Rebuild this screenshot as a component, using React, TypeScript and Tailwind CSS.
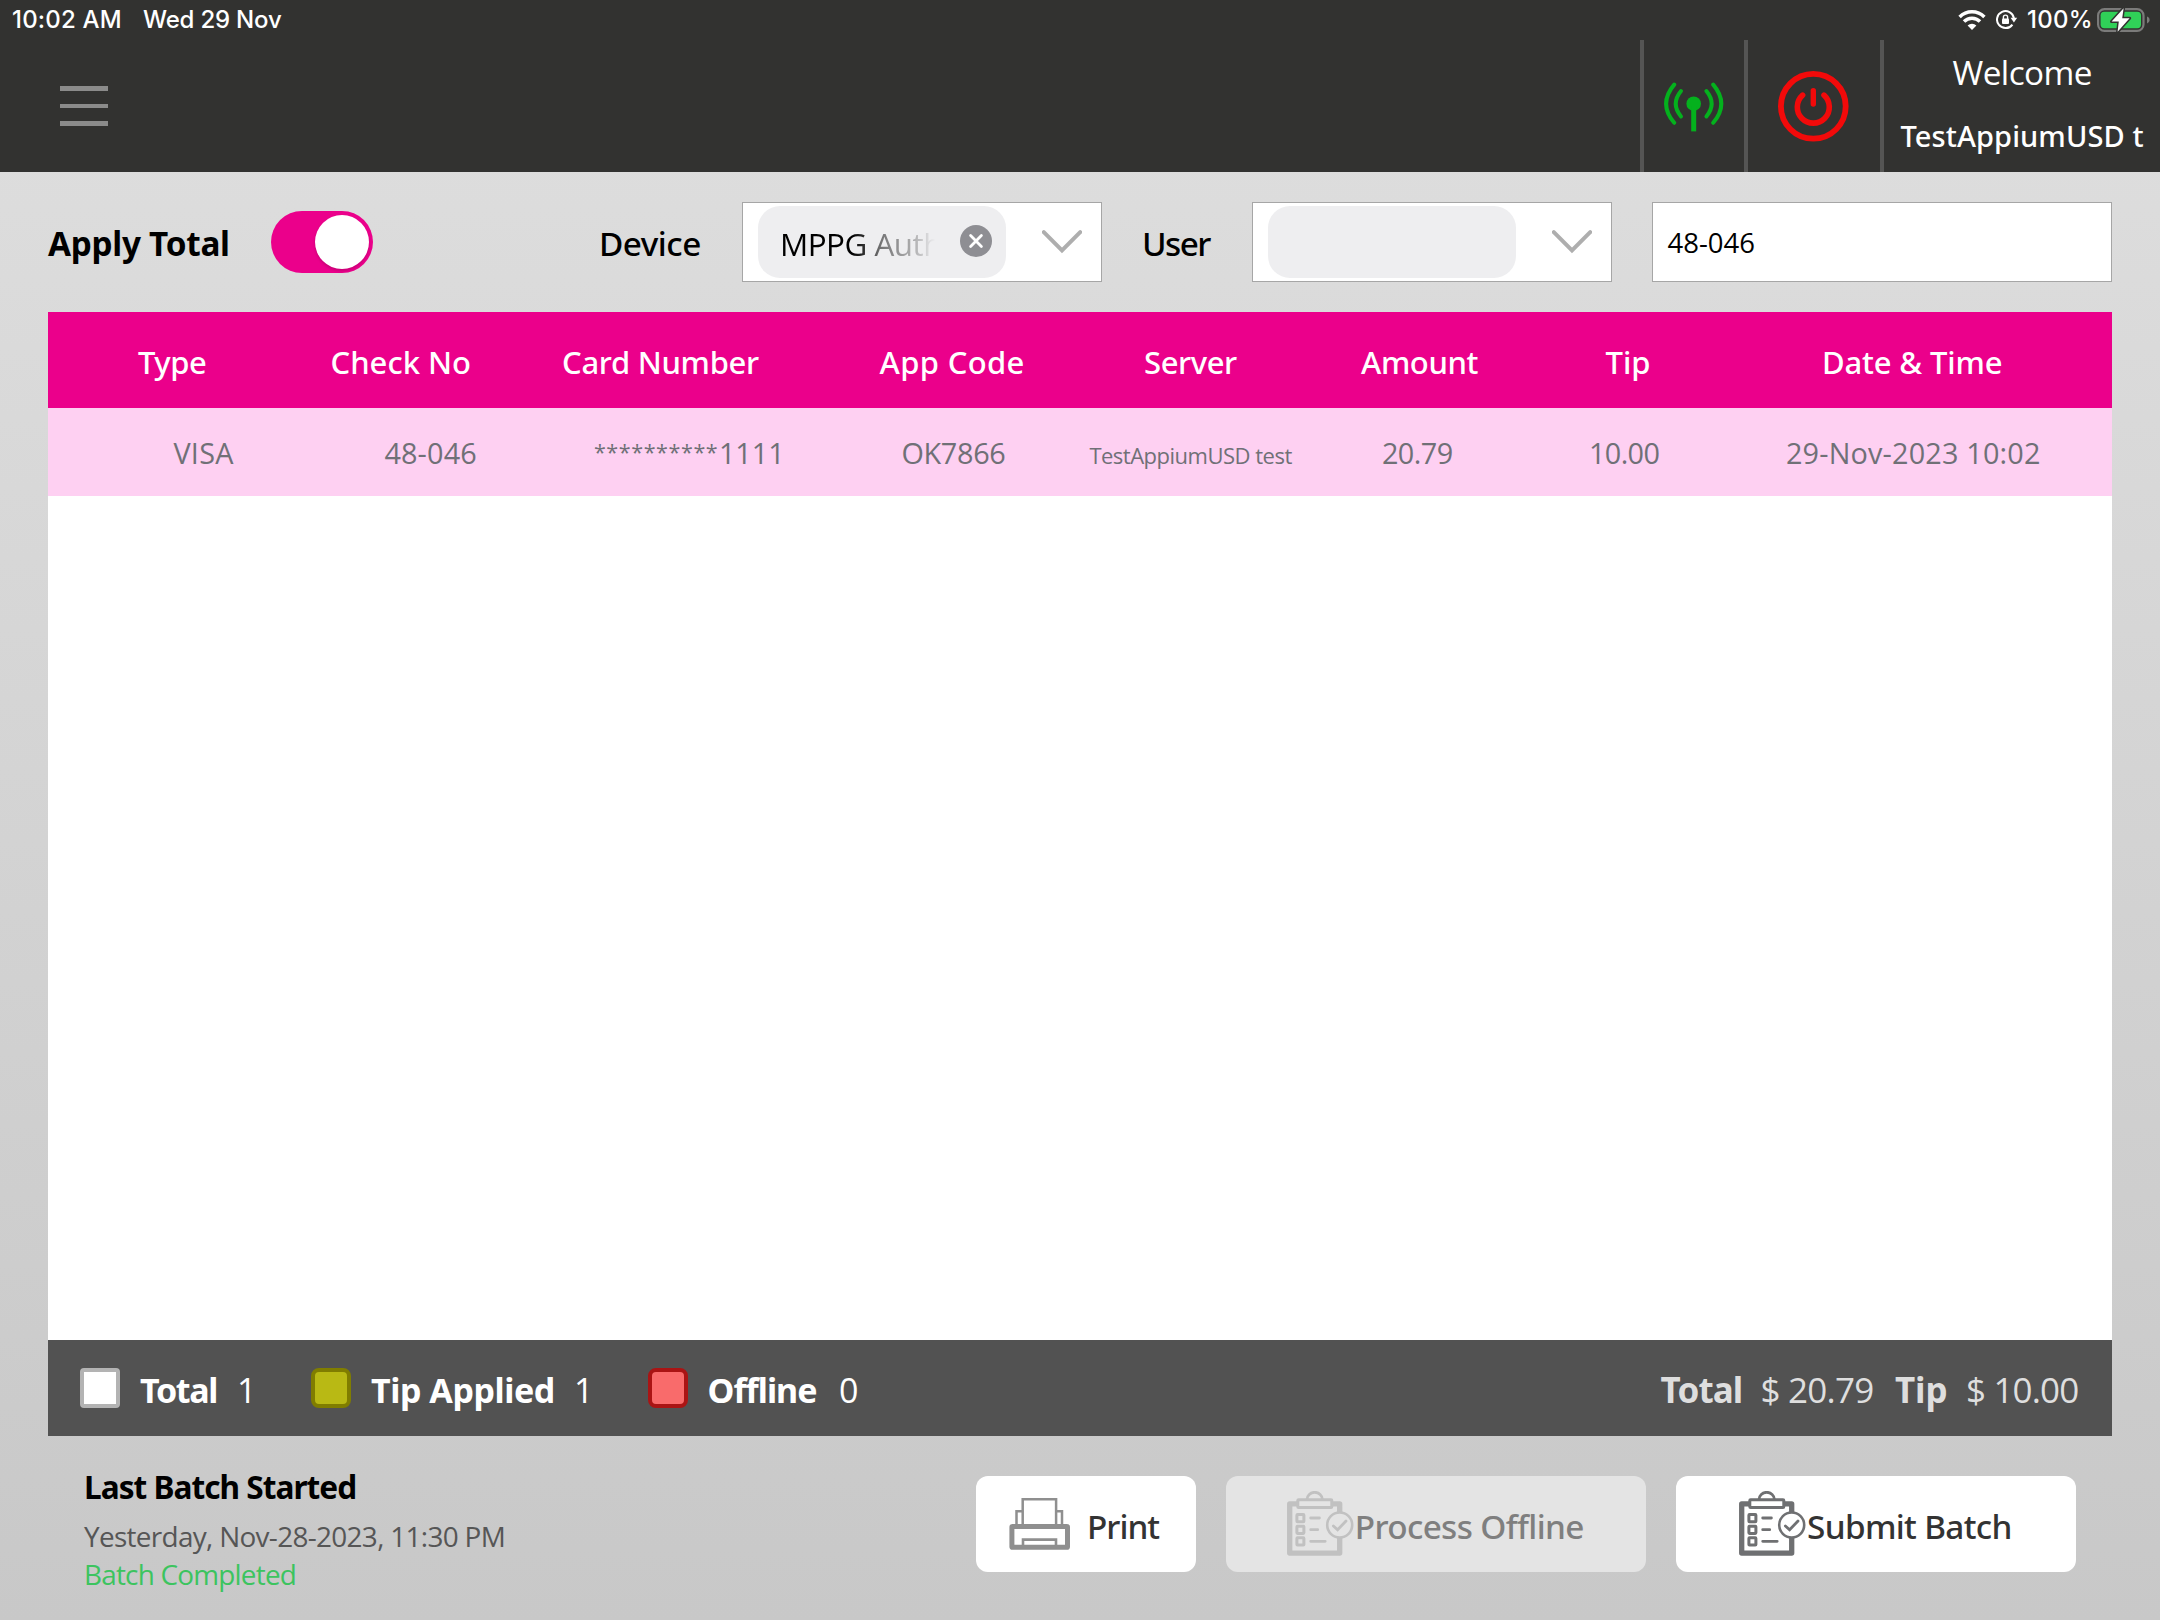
import React from "react";

const headerCells = [
  { label: "Type", cls: "w-[192.5px] tracking-[-0.5px]" },
  { label: "Check No", cls: "w-[231.5px]" },
  { label: "Card Number", cls: "w-[317.5px] tracking-[-0.3px]" },
  { label: "App Code", cls: "w-[264.5px] tracking-[0.35px]" },
  { label: "Server", cls: "w-[217px] tracking-[-0.4px]" },
  { label: "Amount", cls: "w-[244.5px] tracking-[-0.4px]" },
  { label: "Tip", cls: "w-[216.5px]" },
  { label: "Date & Time", cls: "tracking-[-0.15px]" },
];

function WifiIcon() {
  return (
    <svg className="h-[20px] w-[28px]" viewBox="0 0 28 20" fill="none" stroke="#fff" strokeWidth="3.5">
      <path d="M1.6 6.9A17.6 17.6 0 0 1 26.4 6.9" />
      <path d="M6 11.6A11.4 11.4 0 0 1 22 11.6" />
      <path d="M14 20L9.6 15.6A6.2 6.2 0 0 1 18.4 15.6Z" fill="#fff" stroke="none" />
    </svg>
  );
}

function RotationLockIcon() {
  return (
    <svg className="h-[20px] w-[22px]" viewBox="0 0 22 20" fill="none">
      <path d="M16.4 14.6A8.5 8.5 0 1 1 17.9 8.2" stroke="#fff" strokeWidth="2" />
      <path d="M14.6 7.8H21.2L17.9 12.4Z" fill="#fff" />
      <rect x="6" y="8.6" width="7" height="5.4" rx="1" fill="#fff" />
      <path d="M7.4 9V7.2a2.1 2.1 0 0 1 4.2 0V9" stroke="#fff" strokeWidth="1.4" />
    </svg>
  );
}

function BatteryIcon() {
  return (
    <svg className="h-[24px] w-[54px]" viewBox="0 0 54 24" fill="none">
      <rect x="1.1" y="1.1" width="45.4" height="21.8" rx="6.4" stroke="#7b7b7a" strokeWidth="2.2" />
      <rect x="3.6" y="3.8" width="40.4" height="16.4" rx="3.6" fill="#30d158" />
      <path d="M50 8.6c1.6.6 2.6 1.8 2.6 3.4s-1 2.8-2.6 3.4Z" fill="#7b7b7a" />
      <path
        d="M26.6 0.2L14.6 13.6H21.8L20.6 23.8L32.6 10.2H25.2Z"
        fill="#fff"
        stroke="#323230"
        strokeWidth="3"
        strokeLinejoin="round"
        paintOrder="stroke"
      />
    </svg>
  );
}

function AntennaIcon() {
  return (
    <svg className="mt-px h-[50px] w-[60px]" viewBox="0 0 60 50" fill="none" stroke="#04b11d" strokeWidth="4" strokeLinecap="round">
      <path d="M10.2 2.6Q-6 21.7 10.2 40.8" />
      <path d="M17 9Q6.5 21.7 17 34.4" />
      <path d="M42.4 9Q52.9 21.7 42.4 34.4" />
      <path d="M49.2 2.6Q65.4 21.7 49.2 40.8" />
      <circle cx="29.7" cy="21.7" r="7.3" fill="#04b11d" stroke="none" />
      <path d="M29.7 24V49.4" strokeWidth="5" strokeLinecap="butt" />
    </svg>
  );
}

function PowerIcon() {
  return (
    <svg className="h-[71px] w-[71px]" viewBox="0 0 71 71" fill="none" stroke="#f20a0a" strokeLinecap="round">
      <circle cx="35.3" cy="35.3" r="32.4" strokeWidth="5.8" />
      <path d="M24.6 24.2A16 16 0 1 0 46 24.2" strokeWidth="5.6" />
      <path d="M35.3 19.6V33" strokeWidth="5.4" />
    </svg>
  );
}

function PrinterIcon() {
  return (
    <svg className="h-[52px] w-[62px]" viewBox="0 0 62 52" fill="none" stroke="#8f8f8f">
      <path d="M13.7 26V1.3H47.1V26" strokeWidth="2.5" />
      <path d="M7.5 26V13.2H13M53 26V13.2H47.5" strokeWidth="2.5" />
      <rect x="2.9" y="28.5" width="55.6" height="20.8" rx="0.6" strokeWidth="5" />
      <path d="M14 48V41.6H47V48" strokeWidth="2.6" />
    </svg>
  );
}

function ClipboardIcon({ color, paper }: { color: string; paper: string }) {
  return (
    <svg className="h-[66px] w-[68px] shrink-0" viewBox="0 0 68 66" fill="none" stroke={color}>
      <rect x="2.7" y="12.8" width="50" height="49.3" strokeWidth="5.3" strokeLinejoin="round" />
      <path d="M20 8.5a7.7 7.2 0 0 1 15.4 0" strokeWidth="2.8" />
      <rect x="10.8" y="8.8" width="34" height="7.8" rx="0.8" fill={paper} strokeWidth="3" />
      <g strokeWidth="3">
        <rect x="9.9" y="23.6" width="7" height="7.2" rx="0.6" />
        <rect x="9.9" y="35.2" width="7" height="7.2" rx="0.6" />
        <rect x="9.9" y="46.8" width="7" height="7.2" rx="0.6" />
      </g>
      <path d="M23.7 27H32.4M23.7 38.7H30.7M23.7 50.3H38.2" strokeWidth="2.8" strokeLinecap="round" />
      <circle cx="52.7" cy="34" r="12.5" fill={paper} strokeWidth="2.6" />
      <path d="M46.4 35L50.6 38.8L59 30" strokeWidth="2.8" strokeLinecap="round" />
    </svg>
  );
}

function Chevron() {
  return (
    <svg className="mb-px h-[24px] w-[40px]" viewBox="0 0 40 24" fill="none">
      <path d="M1.8 2.2L20 20.4L38.2 2.2" stroke="#aeaeae" strokeWidth="4" strokeLinecap="round" />
    </svg>
  );
}

function Combo({ children }: { children?: React.ReactNode }) {
  return (
    <div className="flex h-[80px] w-[360px] items-center border border-[#a6a6a6] bg-white pl-[15px]">
      <div className="mr-[36px] flex h-[72px] w-[248px] items-center rounded-[22px] bg-[#eeeef0]">{children}</div>
      <Chevron />
    </div>
  );
}

export default function App() {
  return (
    <div className="flex h-[1620px] w-[2160px] flex-col overflow-hidden whitespace-nowrap bg-linear-to-b from-[#dfdfdf] to-[#c8c8c8] font-['Open_Sans','Noto_Sans',sans-serif] text-black">
      <header className="h-[172px] shrink-0 bg-[#323230] text-white">
        <div className="flex h-[40px] items-center pl-[12px] pr-[9px] font-['Inter',sans-serif] text-[24px] font-medium leading-[40px]">
          <span className="w-[131px] tracking-[0.2px]">10:02 AM</span>
          <span className="tracking-[-0.2px]">Wed 29 Nov</span>
          <div className="ml-auto flex items-center">
            <WifiIcon />
            <div className="ml-[10px] flex">
              <RotationLockIcon />
            </div>
            <span className="ml-[9px] w-[70px] tracking-[0.3px]">100%</span>
            <BatteryIcon />
          </div>
        </div>
        <div className="flex h-[132px]">
          <div className="ml-[60px] mt-[46px] flex w-[48px] flex-col gap-[13px] self-start">
            <span className="h-[4.6px] bg-[#8b8b8a]" />
            <span className="h-[4.6px] bg-[#8b8b8a]" />
            <span className="h-[4.6px] bg-[#8b8b8a]" />
          </div>
          <div className="ml-auto flex w-[104px] items-center border-l-4 border-[#555554] pl-[20px]">
            <AntennaIcon />
          </div>
          <div className="flex w-[136px] items-center border-l-4 border-[#555554] pl-[30px]">
            <PowerIcon />
          </div>
          <div className="w-[280px] border-l-4 border-[#555554]">
            <div className="pl-[68.6px] text-[33.3px] leading-[65px] tracking-[-0.6px]">Welcome</div>
            <div className="pl-[16.4px] font-['Noto_Sans',sans-serif] text-[29px] font-medium leading-[62px] tracking-[0.1px]">
              TestAppiumUSD t
            </div>
          </div>
        </div>
      </header>

      <div className="flex h-[140px] shrink-0 items-center pl-[48px]">
        <span className="w-[223px] pt-[4px] font-['Noto_Sans',sans-serif] text-[33.3px] font-bold tracking-[-0.27px]">Apply Total</span>
        <div className="flex h-[62px] w-[102px] items-center justify-end rounded-full bg-[#eb008b] pr-[4px]">
          <div className="size-[54px] rounded-full bg-white shadow-[0_2px_3px_rgba(0,0,0,0.15)]" />
        </div>
        <span className="ml-[226px] w-[143px] pt-[4px] font-['Noto_Sans',sans-serif] text-[33.3px] font-medium tracking-[-0.5px]">Device</span>
        <Combo>
          <div className="ml-[22px] mt-[4px] w-[156px] text-[31.4px] tracking-[-0.5px] text-black [mask-image:linear-gradient(to_right,#000_72px,rgba(0,0,0,0.5)_102px,rgba(0,0,0,0.25)_135px,transparent_155px)]">
            MPPG Auth
          </div>
          <svg className="mb-[2px] ml-[24px] size-[32px]" viewBox="0 0 32 32">
            <circle cx="16" cy="16" r="16" fill="#8e8e93" />
            <path d="M10.6 10.6L21.4 21.4M21.4 10.6L10.6 21.4" stroke="#fff" strokeWidth="2.8" strokeLinecap="round" />
          </svg>
        </Combo>
        <span className="ml-[40px] w-[110px] pt-[4px] font-['Noto_Sans',sans-serif] text-[33.3px] font-medium tracking-[-1.5px]">User</span>
        <Combo />
        <div className="ml-[40px] flex h-[80px] w-[460px] items-center border border-[#a6a6a6] bg-white pl-[14.5px] pt-[2px] text-[27.5px]">
          48-046
        </div>
      </div>

      <main className="mx-[48px] flex h-[1124px] shrink-0 flex-col bg-white">
        <div className="flex h-[96px] items-center bg-[#eb008b] pl-[90px] pt-[4px] font-['Noto_Sans',sans-serif] text-[31px] font-medium text-white">
          {headerCells.map((c) => (
            <span key={c.label} className={c.cls}>
              {c.label}
            </span>
          ))}
        </div>
        <div className="flex h-[88px] items-baseline bg-[#fed0f2] pl-[125.4px] text-[28.8px] leading-[90px] text-[#707077]">
          <span className="w-[211px] tracking-[0.3px]">VISA</span>
          <span className="w-[209.5px] tracking-[0.15px]">48-046</span>
          <span className="w-[307.5px]">
            <span className="relative top-[-4px] inline-block w-[125px] text-[21.5px] leading-none tracking-[0.6px]">**********</span>
            1111
          </span>
          <span className="w-[188px] tracking-[-0.3px]">OK7866</span>
          <span className="w-[292.5px] text-[22px] leading-none tracking-[-0.5px]">TestAppiumUSD test</span>
          <span className="w-[207px] tracking-[-0.52px]">20.79</span>
          <span className="w-[197px] tracking-[-0.59px]">10.00</span>
          <span className="tracking-[0.18px]">29-Nov-2023 10:02</span>
        </div>
        <div className="mt-auto flex h-[96px] items-center bg-[#525252] pl-[32px] text-[34px] leading-[96px] text-white">
          <span className="size-[40px] rounded-[4px] border-4 border-[#b3b3b3] bg-white" />
          <span className="ml-[20px] w-[97px] pt-[4px] font-['Noto_Sans',sans-serif] font-bold tracking-[-1.35px]">Total</span>
          <span className="w-[74px] pt-[4px]">1</span>
          <span className="size-[40px] rounded-[8px] border-4 border-[#807d00] bg-[#b9b914]" />
          <span className="ml-[20px] w-[203px] pt-[4px] font-['Noto_Sans',sans-serif] font-bold tracking-[-0.44px]">Tip Applied</span>
          <span className="w-[74px] pt-[4px]">1</span>
          <span className="size-[40px] rounded-[8px] border-4 border-[#aa1414] bg-[#f96b6b]" />
          <span className="ml-[19.5px] w-[131.5px] pt-[4px] font-['Noto_Sans',sans-serif] font-bold tracking-[-0.99px]">Offline</span>
          <span className="pt-[4px]">0</span>
          <div className="ml-auto flex w-[451.5px] pt-[4px] text-[35px] text-[#dedede]">
            <span className="w-[100px] font-['Noto_Sans',sans-serif] font-bold tracking-[-0.87px]">Total</span>
            <span className="w-[134.5px] tracking-[-0.77px]">$ 20.79</span>
            <span className="w-[71px] font-['Noto_Sans',sans-serif] font-bold tracking-[-0.1px]">Tip</span>
            <span className="tracking-[-0.84px]">$ 10.00</span>
          </div>
        </div>
      </main>

      <footer className="flex h-[184px] items-start">
        <div className="w-[892px] pl-[84px] pt-[26px]">
          <div className="font-['Noto_Sans',sans-serif] text-[31.6px] font-bold leading-[50px] tracking-[-0.98px]">Last Batch Started</div>
          <div className="text-[27.9px] leading-[49px] tracking-[-0.67px] text-[#565656]">Yesterday, Nov-28-2023, 11:30 PM</div>
          <div className="text-[27.9px] leading-[27px] tracking-[-0.78px] text-[#3cc45f]">Batch Completed</div>
        </div>
        <div className="flex gap-[30px] pl-[84px] pt-[40px] font-['Noto_Sans',sans-serif] text-[33.3px] font-medium leading-[96px] text-[#333]">
          <button className="flex h-[96px] w-[220px] items-center rounded-[12px] bg-white pl-[32.5px]">
            <PrinterIcon />
            <span className="ml-[16.5px] pt-[3px] tracking-[-1px]">Print</span>
          </button>
          <button className="flex h-[96px] w-[420px] items-center rounded-[12px] bg-[#e4e4e4] pl-[60.7px] text-[#7f7f7f]">
            <ClipboardIcon color="#c1c1c1" paper="#e4e4e4" />
            <span className="pt-[3px] tracking-[-0.62px]">Process Offline</span>
          </button>
          <button className="flex h-[96px] w-[400px] items-center rounded-[12px] bg-white pl-[63px]">
            <ClipboardIcon color="#6f7072" paper="#ffffff" />
            <span className="pt-[3px] tracking-[-0.65px]">Submit Batch</span>
          </button>
        </div>
      </footer>
    </div>
  );
}
